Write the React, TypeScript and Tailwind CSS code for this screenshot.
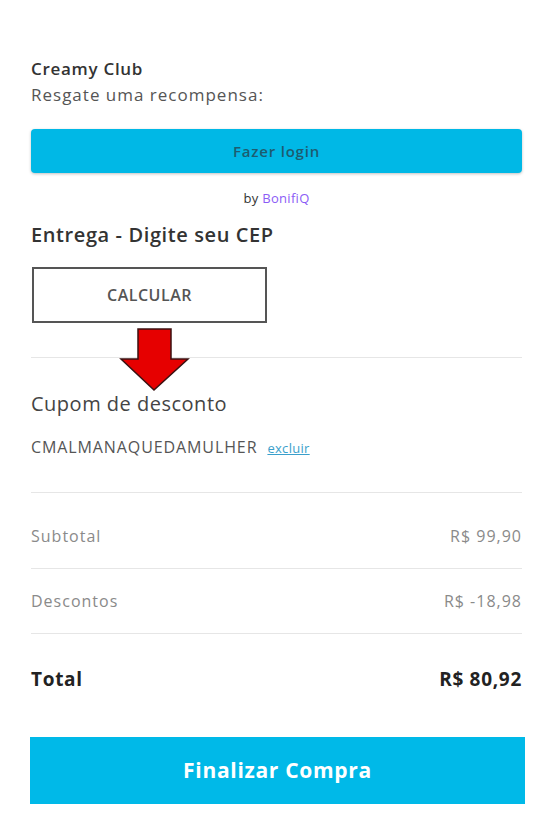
import React from 'react';

const font = { fontFamily: '"Open Sans", "DejaVu Sans", sans-serif' };

const Divider: React.FC<{ className?: string }> = ({ className = '' }) => (
  <div className={`h-px bg-[#e6e6e6] ${className}`} />
);

const SummaryRow: React.FC<{ label: string; value: string; className?: string }> = ({ label, value, className = '' }) => (
  <div className={`flex items-center justify-between h-[64px] text-[16px] tracking-[1px] text-[#8a8a8a] ${className}`}>
    <span>{label}</span>
    <span>{value}</span>
  </div>
);

const RedArrow: React.FC = () => (
  <svg width="72" height="66" viewBox="0 0 72 66" className="absolute left-[119px] top-[327px]">
    <path
      d="M19 2 H52 V32 H69 L35 63 L2 32 H19 Z"
      fill="#e60000"
      stroke="#3a1010"
      strokeWidth="1.5"
      strokeLinejoin="miter"
    />
  </svg>
);

export default function App() {
  return (
    <div className="relative min-h-[813px] w-[550px] bg-white" style={font}>
      <div className="pl-[31px] pr-[28px] pt-[57px]">
        <div className="text-[17px] font-semibold text-[#333] leading-[24px] tracking-[0.7px]">Creamy Club</div>
        <div className="text-[17px] text-[#555] leading-[24px] mt-[2px] tracking-[1px]">Resgate uma recompensa:</div>

        <button className="mt-[22px] w-full h-[44px] rounded-[4px] bg-[#00b8e6] shadow-[0_1px_3px_rgba(0,0,0,0.25)] text-[15px] font-semibold tracking-[0.8px] text-[#1d5c70]">
          Fazer login
        </button>

        <div className="mt-[15px] leading-[20px] text-center text-[13px] text-[#333] tracking-[0.3px]">
          by <span className="text-[#8b5cf6]">BonifiQ</span>
        </div>

        <div className="mt-[14px] text-[20px] font-semibold text-[#333] leading-[26px] tracking-[0.6px]">
          Entrega - Digite seu CEP
        </div>

        <button className="mt-[19px] ml-px w-[235px] h-[56px] border-2 border-[#555] text-[16px] font-semibold tracking-[0.5px] text-[#555]">
          CALCULAR
        </button>

        <Divider className="mt-[34px]" />

        <div className="mt-[33px] text-[20px] text-[#444] leading-[26px] tracking-[0.5px]">Cupom de desconto</div>

        <div className="mt-[20px] flex items-baseline gap-[10px] leading-[20px]">
          <span className="text-[16px] text-[#555] tracking-[0.9px]">CMALMANAQUEDAMULHER</span>
          <span className="text-[13px] font-medium text-[#3a9fcb] underline tracking-[0.3px]">excluir</span>
        </div>

        <Divider className="mt-[34px]" />

        <SummaryRow label="Subtotal" value="R$ 99,90" className="mt-[11px]" />
        <Divider />
        <SummaryRow label="Descontos" value="R$ -18,98" />
        <Divider />

        <div className="flex items-center justify-between h-[90px] text-[19px] font-bold tracking-[0.7px] text-[#222]">
          <span>Total</span>
          <span>R$ 80,92</span>
        </div>
      </div>

      <div className="pl-[30px] pr-[25px] pt-[13px]">
        <button className="w-full h-[67px] bg-[#00b9e8] text-white text-[21px] font-bold tracking-[0.7px]">
          Finalizar Compra
        </button>
      </div>

      <RedArrow />
    </div>
  );
}
